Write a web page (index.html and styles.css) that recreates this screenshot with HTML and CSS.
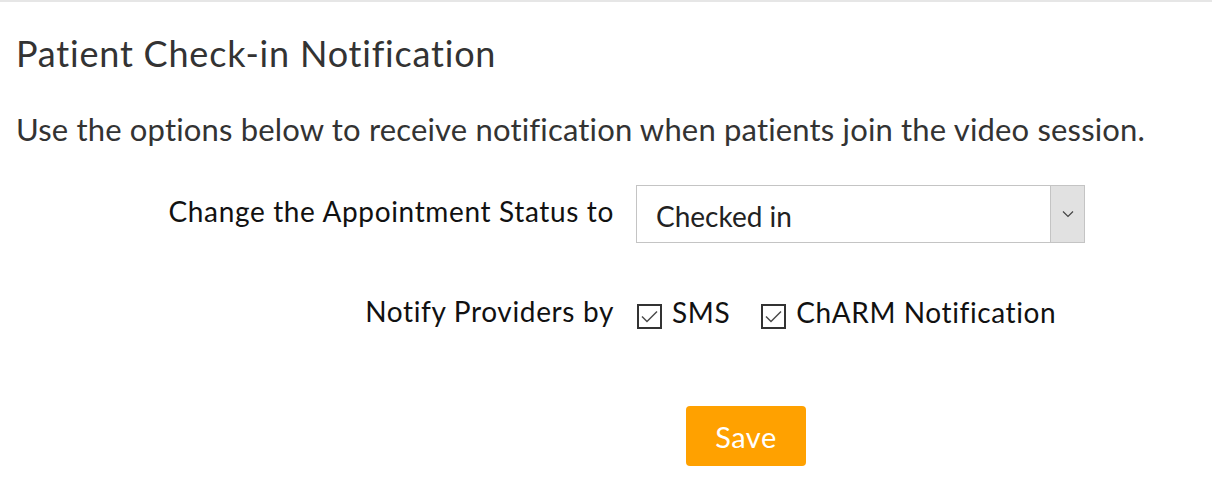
FILE: index.html
```html
<!DOCTYPE html>
<html>
<head>
<meta charset="utf-8">
<link rel="stylesheet" href="styles.css">
</head>
<body>
<div class="page">
  <h1 class="title">Patient Check-in Notification</h1>
  <p class="desc">Use the options below to receive notification when patients join the video session.</p>
  <div class="form">
    <div class="row row-status">
      <label class="label">Change the Appointment Status to</label>
      <div class="select">
        <span class="select-value">Checked in</span>
        <span class="select-arrow">
          <svg width="12" height="8" viewBox="0 0 12 8"><path d="M1 1.5 L6 6.5 L11 1.5" fill="none" stroke="#444" stroke-width="1.2"/></svg>
        </span>
      </div>
    </div>
    <div class="row row-notify">
      <label class="label">Notify Providers by</label>
      <div class="checks">
        <span class="check">
          <span class="box"><svg width="21" height="21" viewBox="0 0 21 21"><path d="M3 10.5 L8 15.5 L18 5.5" fill="none" stroke="#4a4a4a" stroke-width="1.5"/></svg></span>
          <span class="check-text">SMS</span>
        </span>
        <span class="check">
          <span class="box"><svg width="21" height="21" viewBox="0 0 21 21"><path d="M3 10.5 L8 15.5 L18 5.5" fill="none" stroke="#4a4a4a" stroke-width="1.5"/></svg></span>
          <span class="check-text">ChARM Notification</span>
        </span>
      </div>
    </div>
    <div class="row row-save">
      <span class="label"></span>
      <div><button class="save">Save</button></div>
    </div>
  </div>
</div>
</body>
</html>
```
FILE: styles.css
```css
html, body {
  margin: 0;
  padding: 0;
  background: #fff;
}
body {
  font-family: Lato, "Open Sans", sans-serif;
  color: #333;
  border-top: 2px solid #e6e6e6;
}
.page {
  padding: 0 0 0 16px;
}
.title {
  margin: 0;
  padding-top: 29px;
  font-size: 36px;
  font-weight: 400;
  line-height: 44px;
  letter-spacing: 0.8px;
  color: #333;
}
.desc {
  margin: 36px 0 0 0;
  font-size: 31px;
  line-height: 36px;
  letter-spacing: 0.17px;
  color: #333;
  white-space: nowrap;
}
.form {
  margin-top: 38px;
}
.row {
  display: grid;
  grid-template-columns: 598px 1fr;
  column-gap: 22px;
  align-items: start;
}
.label {
  text-align: right;
  font-size: 28px;
  line-height: 34px;
  letter-spacing: 0.65px;
  color: #111;
}
.row-status .label {
  padding-top: 9px;
}
.select {
  width: 447px;
  height: 56px;
  border: 1px solid #c4c4c4;
  display: flex;
  align-items: stretch;
}
.select-value {
  flex: 1;
  display: flex;
  align-items: center;
  padding: 4px 0 0 19px;
  font-size: 28px;
  color: #222;
}
.select-arrow {
  width: 33px;
  background: #e1e1e1;
  border-left: 1px solid #c4c4c4;
  display: flex;
  align-items: center;
  justify-content: center;
}
.row-notify {
  margin-top: 51px;
}
.checks {
  display: flex;
  align-items: flex-start;
  gap: 31px;
  padding-left: 1px;
}
.check {
  display: flex;
  align-items: flex-start;
  gap: 10px;
}
.box {
  margin-top: 10px;
  width: 21px;
  height: 21px;
  border: 2px solid #333;
  display: flex;
  align-items: center;
  justify-content: center;
}
.check-text {
  margin-top: 1px;
  font-size: 28px;
  line-height: 34px;
  letter-spacing: 0.6px;
  color: #111;
}
.row-save {
  margin-top: 77px;
}
.save {
  margin-left: 50px;
  width: 120px;
  height: 60px;
  padding: 0;
  border: none;
  border-radius: 4px;
  background: #ffa100;
  color: #fff;
  font-family: Lato, sans-serif;
  font-size: 29px;
  letter-spacing: 0.5px;
}
```
